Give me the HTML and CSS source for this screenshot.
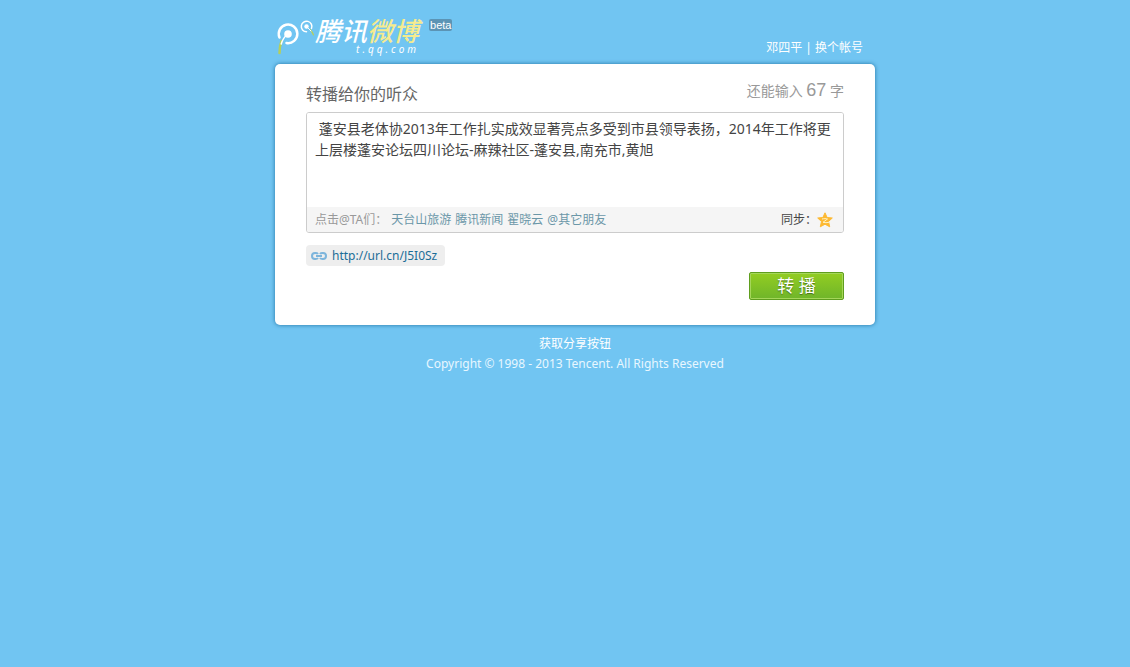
FILE: index.html
```
<!DOCTYPE html>
<html lang="zh-CN">
  <head>
    <meta charset="UTF-8" />
    <meta name="viewport" content="width=device-width, initial-scale=1.0" />
    <title>转播到腾讯微博</title>
    <link rel="stylesheet" href="styles.css">
  </head>
  <body>
    <div class="wrap">
      <header class="header">
        <a class="logo" href="#">
          <svg class="logo-mark" width="40" height="42" viewBox="0 0 40 42" fill="none" stroke-linecap="round">
            <path d="M6.500 25C5 29 4.500 32 4.500 37" stroke="#b5cf5c" stroke-width="2.500" />
            <path d="M13 18C9 21 7.500 23 6.200 28" stroke="#fff" stroke-width="1.500" />
            <path d="M4.500 21.500A9.300 9.300 0 1 1 11.500 27" stroke="#fff" stroke-width="2.500" />
            <circle cx="13" cy="18" r="3.800" fill="#fff" />
            <path d="M35 13.500C36.500 15 37.500 16.500 38.500 19" stroke="#b5cf5c" stroke-width="1.200" />
            <path d="M36.500 12.500A5.300 5.300 0 1 0 31.500 15.800" stroke="#fff" stroke-width="1.500" />
            <path d="M31.500 10.500L36 15" stroke="#fff" stroke-width="1" />
            <circle cx="31.500" cy="10.500" r="2.200" fill="#fff" />
          </svg>
          <span class="logo-text">
            <span class="logo-name">腾讯<em>微博</em></span>
            <span class="logo-domain">t.qq.com</span>
          </span>
          <span class="beta">beta</span>
        </a>
        <nav class="account">
          <a href="#">邓四平</a><span class="sep">|</span><a href="#">换个帐号</a>
        </nav>
      </header>

      <main class="card">
        <form class="share-form">
          <div class="form-head">
            <label class="title" for="content">转播给你的听众</label>
            <p class="counter">还能输入 <span class="count">67</span> 字</p>
          </div>

          <div class="editor">
            <textarea id="content" class="editor-text" spellcheck="false"> 蓬安县老体协2013年工作扎实成效显著亮点多受到市县领导表扬，2014年工作将更上层楼蓬安论坛四川论坛-麻辣社区-蓬安县,南充市,黄旭</textarea>
            <div class="editor-bar">
              <p class="mention">
                <span>点击@TA们：</span>
                <a href="#">天台山旅游</a>
                <a href="#">腾讯新闻</a>
                <a href="#">翟晓云</a>
                <a href="#">@其它朋友</a>
              </p>
              <p class="sync">
                同步：
                <a href="#" class="qzone" aria-label="QQ空间">
                  <svg width="16" height="16" viewBox="0 0 16 16">
                    <path d="M8 0.800L10.100 5.500L15.300 6L11.500 9.500L12.700 14.800L8 12.200L3.300 14.800L4.500 9.500L0.700 6L5.900 5.500Z" fill="#fdb933" stroke="#fdb933" stroke-linejoin="round" />
                    <path d="M5 7C7 6.500 9 6.500 10.500 7L6 10.300C8 10.800 10 10.800 12 10.300" fill="none" stroke="#fff3c4" />
                  </svg>
                </a>
              </p>
            </div>
          </div>

          <a class="link-chip" href="#">
            <svg width="16" height="8" viewBox="0 0 16 8" fill="none" stroke="#7db5dc" stroke-width="2">
              <path d="M7 2C6.500 1.300 6 1 4.500 1H4A3 3 0 0 0 4 7H4.500C6 7 6.500 6.700 7 6" />
              <path d="M9 2C9.500 1.300 10 1 11.500 1H12A3 3 0 0 1 12 7H11.500C10 7 9.500 6.700 9 6" />
              <path d="M5 4H11" />
            </svg>
            http://url.cn/J5I0Sz
          </a>

          <div class="actions">
            <button type="submit" class="submit">转 播</button>
          </div>
        </form>
      </main>

      <footer class="footer">
        <a href="#">获取分享按钮</a>
        <p>Copyright © 1998 - 2013 Tencent. All Rights Reserved</p>
      </footer>
    </div>
  </body>
</html>
```
FILE: styles.css
```
* {
  margin: 0;
  padding: 0;
  box-sizing: border-box;
}

body {
  font-family: "Noto Sans", "Noto Sans CJK SC", sans-serif;
  font-size: 12px;
  line-height: 20px;
  color: #444;
  background: #71c5f2;
  padding-left: 20px;
}

a {
  text-decoration: none;
}

.wrap {
  max-width: 600px;
  margin: 0 auto;
}

/* Header */
.header {
  display: flex;
  justify-content: space-between;
  align-items: flex-end;
  padding: 16px 12px 6px 0;
}

.logo {
  display: flex;
  align-items: flex-start;
  color: #fff;
}

.logo-text {
  display: flex;
  flex-direction: column;
  padding-top: 1px;
  font-style: italic;
}

.logo-name {
  font-size: 26px;
  font-weight: 500;
  line-height: 28px;
}

.logo-name em {
  color: #f5eb8f;
}

.logo-domain {
  align-self: flex-end;
  font-size: 10px;
  line-height: 9px;
  letter-spacing: 3px;
}

.beta {
  margin: 3px 0 0 10px;
  padding: 0 1px;
  font-family: "Liberation Sans", Arial, sans-serif;
  font-size: 11px;
  line-height: 12px;
  background: #5b94b5;
  border-radius: 2px;
}

.account,
.account a {
  color: #fff;
}

.sep {
  margin: 0 3px;
}

/* Card */
.card {
  padding: 16px 31px 25px;
  background: #fff;
  border-radius: 5px;
  box-shadow: 0 0 4px rgba(0, 80, 130, 0.7);
}

.form-head {
  display: flex;
  justify-content: space-between;
  align-items: flex-start;
  height: 32px;
}

.title {
  font-size: 16px;
  line-height: 28px;
  color: #666;
}

.counter {
  font-size: 14px;
  color: #999;
}

.count {
  font-family: "Liberation Sans", Arial, sans-serif;
  font-size: 18px;
}

.editor {
  border: 1px solid #ccc;
  border-radius: 3px;
  overflow: hidden;
}

.editor-text {
  display: block;
  width: 100%;
  height: 94px;
  padding: 5px 8px;
  border: none;
  outline: none;
  resize: none;
  font-family: inherit;
  font-size: 14px;
  line-height: 21px;
  color: #444;
  background: #fff;
}

.editor-bar {
  display: flex;
  justify-content: space-between;
  align-items: center;
  height: 25px;
  padding: 0 10px 0 8px;
  background: #f5f5f5;
}

.mention {
  display: flex;
  gap: 4px;
  color: #999;
}

.mention a {
  color: #6b97a8;
}

.sync {
  display: flex;
  align-items: center;
}

.qzone {
  display: flex;
}

.link-chip {
  display: inline-flex;
  align-items: center;
  gap: 5px;
  margin-top: 12px;
  padding: 0 8px 0 5px;
  height: 21px;
  color: #1b6d97;
  background: #eee;
  border-radius: 4px;
}

.actions {
  display: flex;
  justify-content: flex-end;
  margin-top: 6px;
}

.submit {
  width: 95px;
  height: 28px;
  border: 1px solid #5f9e1e;
  border-radius: 2px;
  font-family: inherit;
  font-size: 17px;
  line-height: 24px;
  color: #fff;
  text-shadow: 0 1px 1px rgba(0, 0, 0, 0.4);
  background: linear-gradient(#93cd22, #6fb52a);
  box-shadow: inset 0 0 0 1px #a5d65a;
  cursor: pointer;
}

/* Footer */
.footer {
  padding-top: 9px;
  text-align: center;
  color: #e8f7ff;
}

.footer a {
  color: #fff;
}
```
